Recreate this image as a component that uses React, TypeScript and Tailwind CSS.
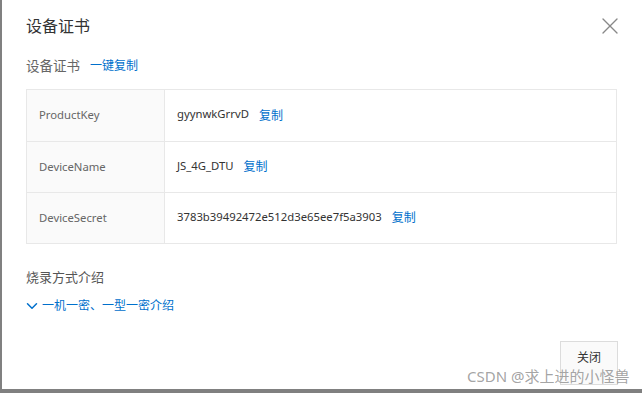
import { ChevronDown, X } from "lucide-react";

const ROWS = [
  { label: "ProductKey", value: "gyynwkGrrvD" },
  { label: "DeviceName", value: "JS_4G_DTU" },
  { label: "DeviceSecret", value: "3783b39492472e512d3e65ee7f5a3903" },
];

export default function App() {
  return (
    <div
      className="w-[642px] h-[393px] bg-[#808080] overflow-hidden"
      style={{ fontFamily: '"Noto Sans", "Noto Sans CJK SC", sans-serif' }}
    >
      <div className="ml-[2px] w-[640px] h-[389px] bg-white relative flex flex-col">
        {/* header */}
        <div className="h-[52px] flex items-center justify-between pl-[24px] pr-[18px]">
          <h2 className="text-[16px] text-[#333] leading-none">设备证书</h2>
          <X className="w-[28px] h-[28px] text-[#888]" strokeWidth={1.15} />
        </div>

        <div className="px-[24px]">
          <div className="flex items-center gap-[10px] h-[22px] mt-[3px]">
            <span className="text-[13.5px] text-[#666]">设备证书</span>
            <span className="text-[12px] text-[#0070cc]">一键复制</span>
          </div>

          {/* cert table */}
          <div className="mt-[12px] w-[591px] border border-[#e8e8e8]">
            {ROWS.map((r, i) => (
              <div key={r.label} className={`flex h-[51px] ${i > 0 ? "border-t border-[#e8e8e8]" : ""}`}>
                <div className="w-[138px] bg-[#fafafa] border-r border-[#e8e8e8] flex items-center pl-[12px] text-[11.3px] text-[#666]">
                  {r.label}
                </div>
                <div className="flex-1 flex items-center pl-[12px] gap-[10px]">
                  <span className="text-[11.3px] text-[#333] -mt-[2px]">{r.value}</span>
                  <span className="text-[12px] text-[#0070cc]">复制</span>
                </div>
              </div>
            ))}
          </div>

          <div className="mt-[23px] text-[13px] text-[#555] leading-[20px]">烧录方式介绍</div>
          <div className="mt-[9px] flex items-center gap-[1px] text-[12px] text-[#0070cc] leading-[20px]">
            <ChevronDown className="w-[18px] h-[18px] -ml-[3px]" strokeWidth={2} />
            <span>一机一密、一型一密介绍</span>
          </div>
        </div>

        {/* footer */}
        <div className="absolute left-[558px] top-[341px] w-[58px] h-[44px] border border-[#dcdcdc] bg-[#fafafa] flex items-start justify-center pt-[7px] text-[12px] text-[#333]">
          关闭
        </div>
        <div className="absolute left-[465px] top-[366px] text-[15px] text-[#999]/90 leading-[20px] whitespace-nowrap">
          CSDN @求上进的小怪兽
        </div>
      </div>
    </div>
  );
}
